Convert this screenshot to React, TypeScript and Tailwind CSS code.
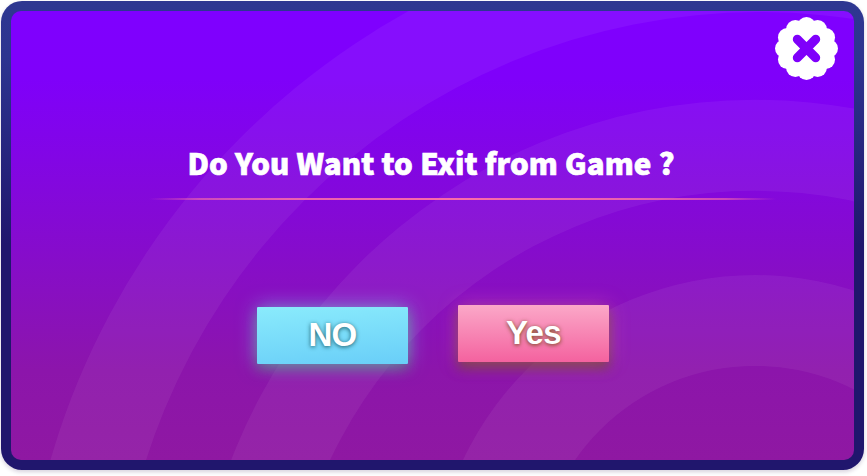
const scallops = Array.from({ length: 12 }, (_, i) => (i * Math.PI) / 6);

function Rings() {
  return (
    <svg className="absolute inset-0 h-full w-full" viewBox="11 11 843 449" fill="#fff" fillRule="evenodd" fillOpacity="0.055" aria-hidden="true">
      <path d="M21 668.4a751.4 751.4 0 1 1 1502.8 0a751.4 751.4 0 1 1 -1502.8 0ZM115.6 656a643.7 643.7 0 1 1 1287.4 0a643.7 643.7 0 1 1 -1287.4 0Z" />
      <path d="M194 661a561 561 0 1 1 1122 0a561 561 0 1 1 -1122 0ZM285 661a470 470 0 1 1 940 0a470 470 0 1 1 -940 0Z" />
      <path d="M432 598a323 323 0 1 1 646 0a323 323 0 1 1 -646 0ZM536 585a219 219 0 1 1 438 0a219 219 0 1 1 -438 0Z" />
    </svg>
  );
}

function CloseButton() {
  return (
    <button aria-label="Close" className="absolute top-[6px] right-[16px] h-[63px] w-[63px]">
      <svg viewBox="-31.5 -31.5 63 63" className="block h-full w-full">
        <g fill="#fff">
          <circle r="24" />
          {scallops.map((a) => (
            <circle key={a} cx={22.2 * Math.cos(a)} cy={22.2 * Math.sin(a)} r="9.3" />
          ))}
        </g>
        <path d="M-9.2-9.2 9.2 9.2M9.2-9.2-9.2 9.2" stroke="#7f00fb" strokeWidth="9" strokeLinecap="round" />
      </svg>
    </button>
  );
}

export default function App() {
  return (
    <div className="h-[476px] w-[867px] overflow-hidden bg-white pt-px pl-px">
      <div className="h-[469px] w-[863px] rounded-[21px] bg-[linear-gradient(180deg,#2e3791_0%,#2d3490_12%,#20166d_52%,#20166d_100%)] p-[10px] shadow-[0_2px_4px_rgba(50,20,80,0.2)]">
        <div className="relative flex h-full flex-col items-center overflow-hidden rounded-[10px] bg-[linear-gradient(180deg,#7f00ff_0%,#7f00fa_15%,#850bd0_50%,#8c15ab_80%,#8f18a2_100%)]">
          <Rings />
          <CloseButton />
          <h1 className="relative mt-[127px] mr-[3px] h-[48px] shrink-0 whitespace-nowrap text-center font-['Noto_Sans_CJK_SC','Noto_Sans',sans-serif] text-[29.5px] leading-[48px] font-black tracking-[0.05px] [word-spacing:0.4px] text-white [-webkit-text-stroke:0.7px_#fff]">
            Do You Want to Exit from Game ?
          </h1>
          <div className="relative mt-[12px] ml-[60px] h-[2px] w-[627px] shrink-0 bg-[linear-gradient(90deg,transparent,rgba(251,108,168,0.6)_8%,rgba(251,108,168,0.85)_22%,#fb6ca8_50%,rgba(251,108,168,0.85)_78%,rgba(251,108,168,0.6)_92%,transparent)]" />
          <div className="relative mt-[105px] flex gap-[50px] self-start pl-[246px] font-['Liberation_Sans',Arial,sans-serif] text-[33px] font-bold text-white">
            <button className="mt-[2px] h-[57px] w-[151px] rounded-[1px] bg-[linear-gradient(175deg,#8aebfc,#69cef8)] pb-[2px] tracking-[-0.7px] shadow-[0_0_20px_rgba(125,220,250,0.6),0_5px_12px_rgba(70,110,80,0.6)] [text-shadow:0_1px_4px_rgba(20,80,90,0.9)]">
              NO
            </button>
            <button className="h-[57px] w-[151px] rounded-[1px] bg-[linear-gradient(180deg,#fba8c8,#f4629f)] pb-[2px] tracking-[-0.6px] shadow-[0_0_20px_rgba(251,120,180,0.4),0_6px_12px_rgba(100,70,30,0.75)] [text-shadow:0_1px_4px_rgba(90,60,0,0.9)]">
              Yes
            </button>
          </div>
        </div>
      </div>
    </div>
  );
}
